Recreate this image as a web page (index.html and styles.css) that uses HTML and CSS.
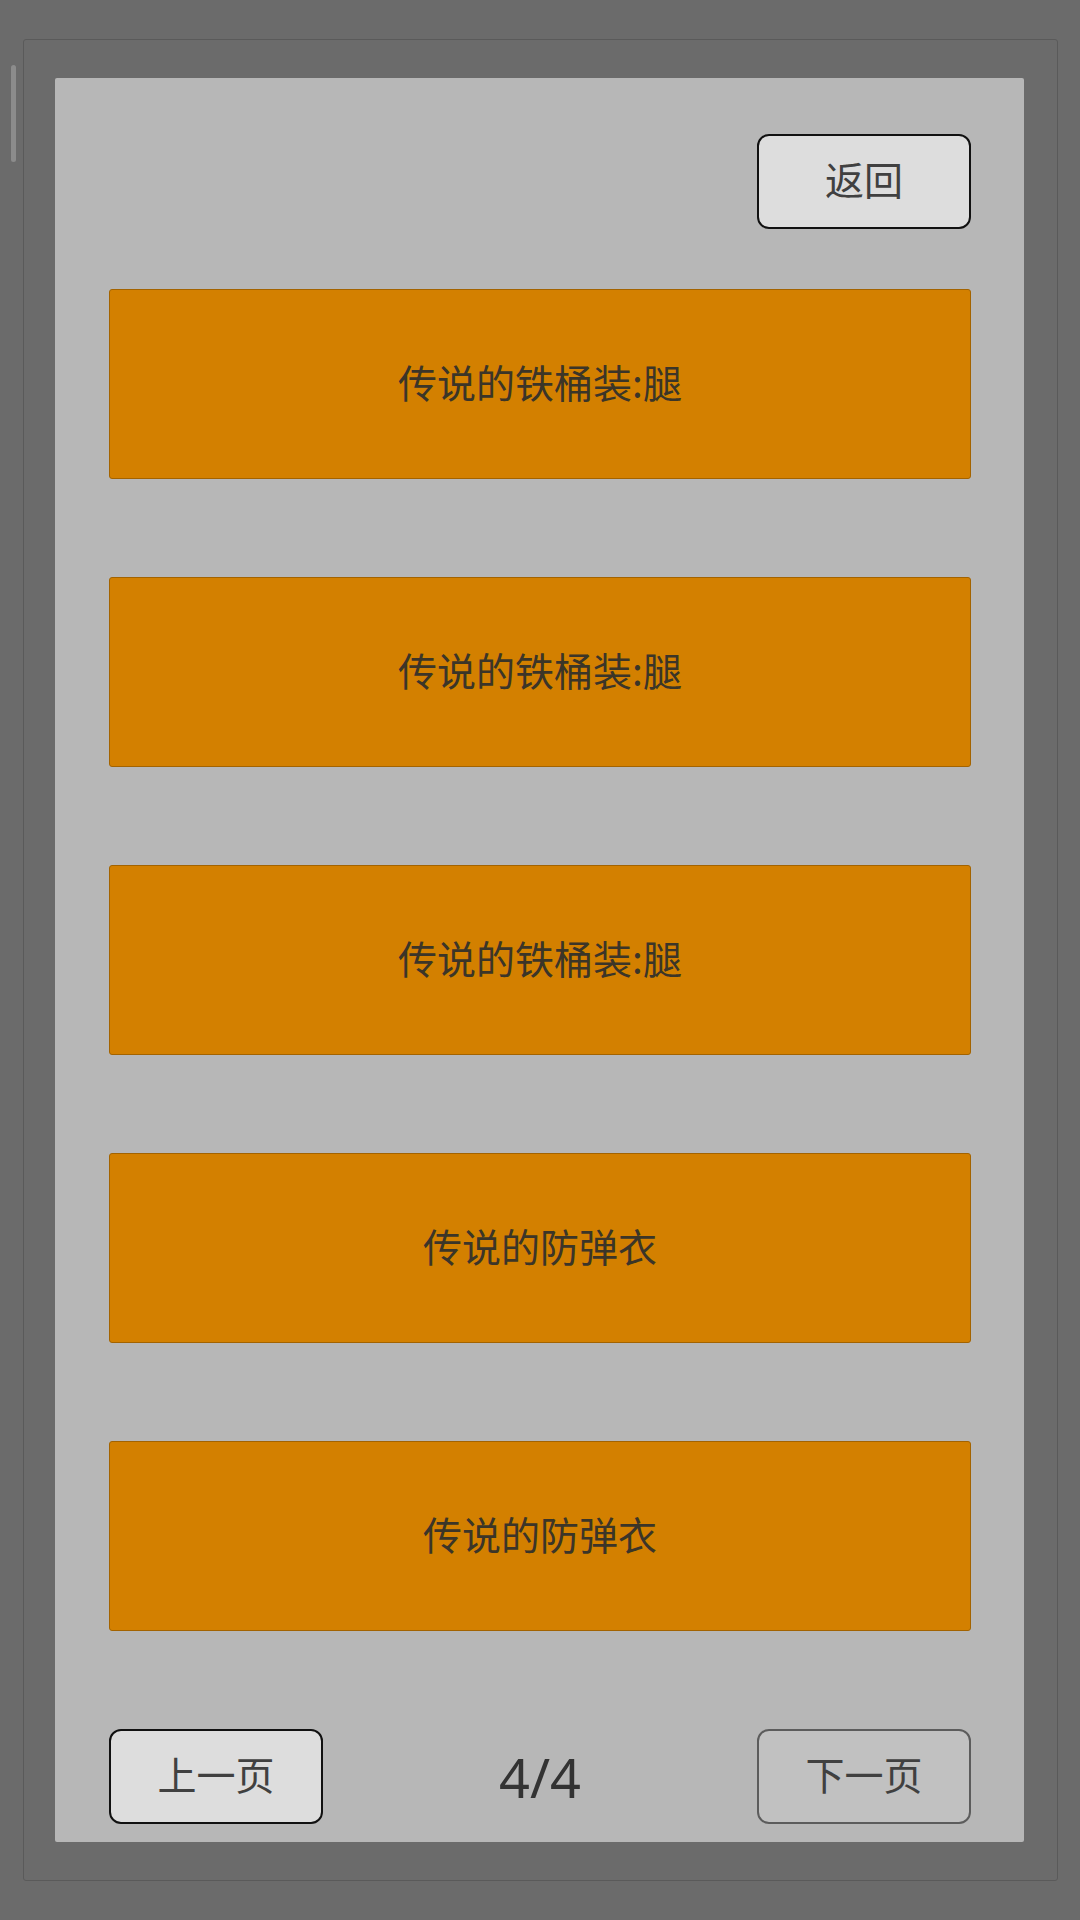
FILE: index.html
```html
<!DOCTYPE html>
<html lang="zh-CN">
<head>
<meta charset="utf-8">
<title>装备列表</title>
<link rel="stylesheet" href="styles.css">
</head>
<body>
<div class="scrollbar"></div>
<div class="frame">
  <div class="panel">
    <div class="header">
      <button class="btn btn-active">返回</button>
    </div>
    <div class="list">
      <div class="card">传说的铁桶装:腿</div>
      <div class="card">传说的铁桶装:腿</div>
      <div class="card">传说的铁桶装:腿</div>
      <div class="card">传说的防弹衣</div>
      <div class="card">传说的防弹衣</div>
    </div>
    <div class="footer">
      <button class="btn btn-active">上一页</button>
      <div class="page">4/4</div>
      <button class="btn btn-disabled">下一页</button>
    </div>
  </div>
</div>
</body>
</html>
```
FILE: styles.css
```css
* { box-sizing: border-box; }
html, body {
  margin: 0;
  background: #6b6b6b;
}
body {
  width: 1080px;
  height: 1920px;
  padding: 39px 0 0 23px;
  position: relative;
  font-family: "Noto Sans CJK SC", "Noto Sans", sans-serif;
  overflow: hidden;
}
.scrollbar {
  position: absolute;
  left: 11px;
  top: 65px;
  width: 5px;
  height: 97px;
  border-radius: 3px;
  background: #8c8c8c;
}
.frame {
  width: 1035px;
  height: 1842px;
  border: 1px solid #5a5a5a;
  border-radius: 3px;
  padding: 38px 0 0 31px;
}
.panel {
  width: 969px;
  height: 1764px;
  background: #b7b7b7;
  border-radius: 2px;
  padding: 56px 53px 0 54px;
  display: flex;
  flex-direction: column;
}
.header {
  display: flex;
  justify-content: flex-end;
}
.btn {
  width: 214px;
  height: 95px;
  border-radius: 12px;
  font-family: "Noto Sans CJK SC", "Noto Sans", sans-serif;
  font-size: 39px;
  line-height: 1;
  color: #404040;
  padding: 0 0 6px 0;
  display: flex;
  align-items: center;
  justify-content: center;
}
.btn-active {
  background: #dddddd;
  border: 2px solid #111111;
}
.btn-disabled {
  background: #c1c1c1;
  border: 2px solid #5c5c5c;
}
.list {
  margin-top: 60px;
  display: flex;
  flex-direction: column;
  gap: 98px;
}
.card {
  height: 190px;
  background: #d38000;
  border: 1px solid #a36300;
  border-radius: 3px;
  display: flex;
  align-items: center;
  justify-content: center;
  font-size: 39px;
  line-height: 1;
  padding-bottom: 6px;
  color: #3b3528;
}
.footer {
  margin-top: 98px;
  display: flex;
  justify-content: space-between;
  align-items: center;
}
.page {
  font-family: "Noto Sans", sans-serif;
  font-size: 54px;
  color: #333333;
  line-height: 1;
}
```
